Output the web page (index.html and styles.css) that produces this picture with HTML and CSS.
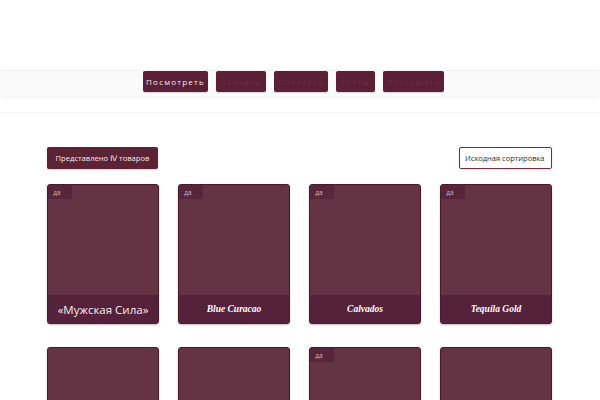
FILE: index.html
```html
<!DOCTYPE html>
<html lang="ru">
<head>
<meta charset="utf-8">
<link rel="stylesheet" href="styles.css">
</head>
<body>
<header class="top"></header>
<nav class="navband">
  <div class="navrow">
    <a class="nbtn active">Посмотреть</a>
    <a class="nbtn">Скачать</a>
    <a class="nbtn">Показать</a>
    <a class="nbtn">Тесты</a>
    <a class="nbtn">Послушать</a>
  </div>
</nav>
<div class="divider"></div>
<main class="shop">
  <div class="toolbar">
    <div class="count">Представлено Ⅳ товаров</div>
    <div class="sort"><span>Исходная сортировка</span></div>
  </div>
  <div class="grid">
    <div class="card"><span class="badge">да</span><div class="img"></div><div class="title sans">«Мужская Сила»</div></div>
    <div class="card"><span class="badge">да</span><div class="img"></div><div class="title script">Blue Curacao</div></div>
    <div class="card"><span class="badge">да</span><div class="img"></div><div class="title script">Calvados</div></div>
    <div class="card"><span class="badge">да</span><div class="img"></div><div class="title script">Tequila Gold</div></div>
    <div class="card"><div class="img"></div><div class="title"></div></div>
    <div class="card"><div class="img"></div><div class="title"></div></div>
    <div class="card"><span class="badge">да</span><div class="img"></div><div class="title"></div></div>
    <div class="card"><div class="img"></div><div class="title"></div></div>
  </div>
</main>
</body>
</html>
```
FILE: styles.css
```css
* { box-sizing: border-box; }
html, body { margin: 0; padding: 0; background: #fff; }
body { font-family: "Open Sans", "DejaVu Sans", sans-serif; width: 600px; height: 400px; overflow: hidden; }
.top { height: 70px; background: #fff; }
.navband {
  height: 26px;
  background: #fafafa;
  border-top: 1px solid #f2f2f2;
  box-shadow: 0 2px 4px rgba(0,0,0,0.05);
}
.navrow { display: flex; gap: 8px; padding-left: 143px; }
.nbtn {
  display: flex; align-items: center; justify-content: center;
  height: 21px;
  background: #5b2035;
  border-radius: 2px;
  color: #6a3044;
  font-size: 8px;
  letter-spacing: 1.2px;
  box-shadow: 0 1px 1px rgba(0,0,0,0.15);
}
.nbtn:nth-child(1) { width: 65px; }
.nbtn:nth-child(2) { width: 50px; }
.nbtn:nth-child(3) { width: 54px; }
.nbtn:nth-child(4) { width: 39px; }
.nbtn:nth-child(5) { width: 61px; }
.nbtn.active { color: #f3e6ea; }
.divider { height: 1px; background: #f3f3f3; margin-top: 16px; }
.shop { padding: 34px 48px 0 47px; }
.toolbar { display: flex; justify-content: space-between; align-items: center; height: 22px; }
.count {
  height: 22px; width: 111px;
  background: #5c2235; color: #f4e9ec;
  border-radius: 2px;
  font-size: 7.6px;
  display: flex; align-items: center; justify-content: center;
  box-shadow: 0 1px 2px rgba(0,0,0,0.2);
}
.sort {
  height: 22px; width: 93px;
  border: 1px solid #6b3042;
  border-radius: 2px;
  background: #fff;
  color: #3a2a30;
  font-size: 7.5px;
  white-space: nowrap;
  display: flex; align-items: center;
  padding-left: 5px;
  box-shadow: 0 1px 2px rgba(0,0,0,0.15);
}
.grid {
  display: grid;
  grid-template-columns: repeat(4, 112px);
  column-gap: 19px;
  row-gap: 23px;
  margin-top: 15px;
}
.card {
  position: relative;
  height: 140px;
  border: 1px solid #4a1c2b;
  border-radius: 3px;
  overflow: hidden;
  display: flex; flex-direction: column;
  box-shadow: 0 1px 2px rgba(0,0,0,0.25);
  background: #643445;
}
.img { height: 110px; background: #643445; }
.title {
  flex: 1;
  background: #56213a;
  color: #fff;
  display: flex; align-items: center; justify-content: center;
}
.title.sans { font-family: "Open Sans", "DejaVu Sans", sans-serif; font-size: 11.5px; color: #f6eef1; }
.title.script { font-family: "Liberation Serif", serif; font-style: italic; font-weight: bold; font-size: 9.5px; }
.badge {
  position: absolute; left: 0; top: 0;
  width: 24px; height: 14px;
  background: #57263a;
  color: #d2b4be;
  font-size: 6.5px;
  display: flex; align-items: center; justify-content: center;
  padding-right: 6px;
}
```
